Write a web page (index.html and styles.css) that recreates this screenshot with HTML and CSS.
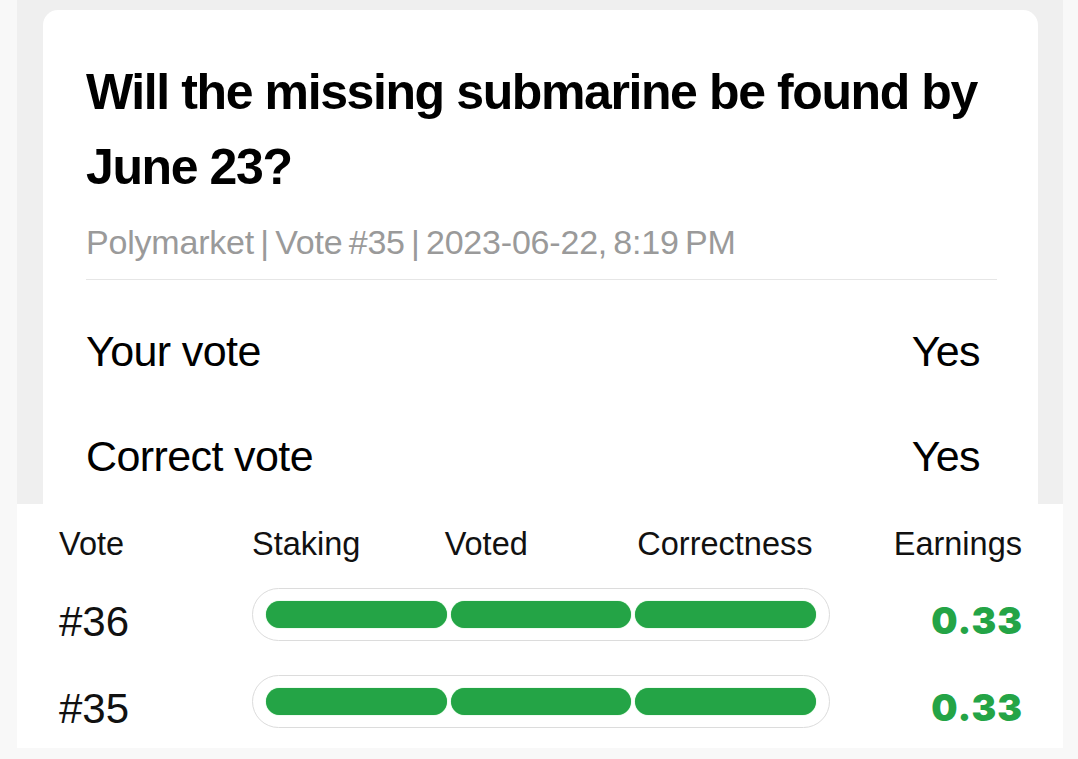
FILE: index.html
```html
<!DOCTYPE html>
<html lang="en">
<head>
<meta charset="utf-8">
<title>Vote result</title>
<link rel="stylesheet" href="styles.css">
</head>
<body>
<section class="top">
  <div class="card">
    <h1 class="title">Will the missing submarine be found by June 23?</h1>
    <p class="meta">Polymarket | Vote #35 | 2023-06-22, 8:19 PM</p>
    <div class="divider"></div>
    <div class="rows">
      <div class="row"><span>Your vote</span><span>Yes</span></div>
      <div class="row"><span>Correct vote</span><span>Yes</span></div>
    </div>
  </div>
</section>
<section class="history">
  <div class="hrow head">
    <div>Vote</div>
    <div class="labels"><span>Staking</span><span>Voted</span><span>Correctness</span></div>
    <div class="earn-h">Earnings</div>
  </div>
  <div class="hrow item">
    <div class="num">#36</div>
    <div class="pill"><i></i><i></i><i></i></div>
    <div class="earn">0.33</div>
  </div>
  <div class="hrow item">
    <div class="num">#35</div>
    <div class="pill"><i></i><i></i><i></i></div>
    <div class="earn">0.33</div>
  </div>
</section>
</body>
</html>
```
FILE: styles.css
```css
html, body {
  margin: 0;
  padding: 0;
}
body {
  background: #f8f8f8;
  width: 1078px;
  height: 759px;
  overflow: hidden;
  font-family: "Liberation Sans", Arial, sans-serif;
  color: #000;
}
.top {
  margin-left: 17px;
  width: 1046px;
  height: 504px;
  box-sizing: border-box;
  padding: 10px 25px 0 26px;
  background: #efefef;
  overflow: hidden;
}
.card {
  height: 100%;
  box-sizing: border-box;
  background: #fff;
  border-radius: 15px 15px 0 0;
  padding: 45px 41px 0 43px;
}
.title {
  margin: 0;
  font-size: 50px;
  line-height: 75px;
  font-weight: 700;
  letter-spacing: -1.4px;
}
.meta {
  margin: 17px 0 0;
  font-size: 34px;
  line-height: 40px;
  color: #9a9a9a;
  letter-spacing: -0.2px;
  word-spacing: -3px;
}
.divider {
  margin-top: 17px;
  height: 1px;
  background: #e6e6e6;
}
.rows {
  padding: 19px 17px 0 0;
}
.row {
  display: flex;
  justify-content: space-between;
  font-size: 43px;
  line-height: 105px;
  letter-spacing: -0.6px;
}
.history {
  margin-left: 17px;
  width: 1046px;
  box-sizing: border-box;
  background: #fff;
  padding: 20px 41px 13px 42px;
}
.hrow {
  display: grid;
  grid-template-columns: 193px 578px 1fr;
  align-items: start;
}
.head {
  font-size: 32.5px;
  line-height: 40px;
  color: #111;
}
.labels {
  display: grid;
  grid-template-columns: repeat(3, 1fr);
}
.earn-h {
  text-align: right;
}
.item {
  margin-top: 24px;
}
.item + .item {
  margin-top: 27px;
}
.num {
  font-size: 42px;
  line-height: 53px;
  padding-top: 7px;
  color: #111;
}
.pill {
  height: 53px;
  box-sizing: border-box;
  border: 1.5px solid #dcdcdc;
  border-radius: 27px;
  padding: 11.5px 13px;
  display: flex;
  gap: 4px;
}
.pill i {
  flex: 1;
  height: 27px;
  border-radius: 14px;
  background: #24a446;
  box-shadow: 0 0 1px #5ad46e;
}
.earn {
  text-align: right;
  font-family: Inter, "Liberation Sans", sans-serif;
  font-weight: 900;
  font-size: 37px;
  line-height: 53px;
  padding-top: 6px;
  letter-spacing: 1px;
  margin-right: -1px;
  color: #24a446;
}
```
